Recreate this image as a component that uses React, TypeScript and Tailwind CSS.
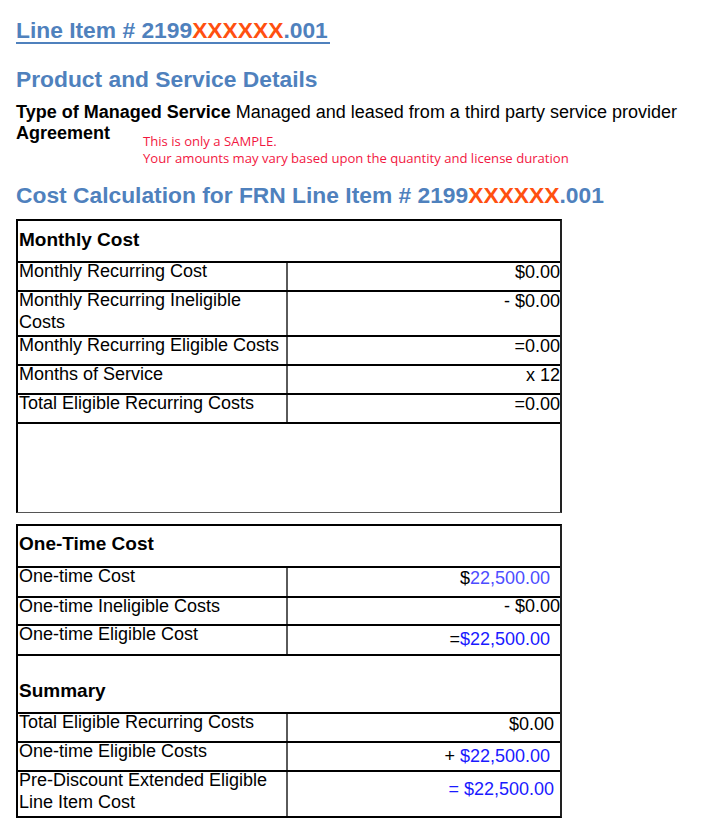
const BLUE_HEAD = "text-[#4f81bd]";

function Row({
  label,
  value,
  h = "h-[29px]",
  valueClass = "pt-[1px]",
  border = true,
}: {
  label: string[];
  value: React.ReactNode;
  h?: string;
  valueClass?: string;
  border?: boolean;
}) {
  return (
    <div className={`flex ${border ? "border-b-2 border-black" : ""} ${h}`}>
      <div className="w-[270px] shrink-0 border-r-2 border-[#5a5a5a] pl-[1px]">
        {label.map((line, i) => (
          <div key={i} className={`leading-[16px] ${i > 0 ? "mt-[6px]" : ""}`}>
            {line}
          </div>
        ))}
      </div>
      <div className="flex-1 text-right">
        <div className={`leading-[16px] ${valueClass}`}>{value}</div>
      </div>
    </div>
  );
}

function Xs() {
  return <span className="text-[#ff5010]">XXXXXX</span>;
}

export default function App() {
  return (
    <div
      className="min-h-[833px] bg-white pl-[16px] pt-[18px] text-black text-[18px]"
      style={{ fontFamily: '"Liberation Sans", Arial, sans-serif' }}
    >
      {/* Title */}
      <div className="inline-block border-b-2 border-[#4f81bd] pr-[2px]">
        <h1 className={`text-[22.8px] font-bold leading-[24px] ${BLUE_HEAD}`}>
          Line Item # 2199<Xs />.001
        </h1>
      </div>

      <h2 className={`mt-[21px] text-[22.8px] font-bold leading-[24px] ${BLUE_HEAD}`}>
        Product and Service Details
      </h2>

      <p className="mt-[11px] leading-[21px]">
        <span className="font-bold">Type of Managed Service</span> Managed and leased from a third party service provider
      </p>
      <div className="flex">
        <div className="w-[127px] shrink-0 font-bold leading-[21px]">Agreement</div>
        <div
          className="pt-[10px] text-[13.1px] leading-[17px] text-[#f2173f]"
          style={{ fontFamily: '"Open Sans", "Noto Sans", sans-serif' }}
        >
          <p>This is only a SAMPLE.</p>
          <p>Your amounts may vary based upon the quantity and license duration</p>
        </div>
      </div>

      <h2 className={`mt-[16px] text-[22.8px] font-bold leading-[24px] ${BLUE_HEAD}`}>
        Cost Calculation for FRN Line Item # 2199<Xs />.001
      </h2>

      {/* Monthly cost */}
      <div className="mt-[12px] w-[546px] border-t-2 border-l-2 border-r-2 border-b-[1.5px] border-t-black border-l-black border-r-[#222] border-b-[#555]">
        <div className="h-[42px] border-b-2 border-black pl-[1px] pt-[9px] text-[19px] font-bold leading-[20px]">
          Monthly Cost
        </div>
        <Row label={["Monthly Recurring Cost"]} value="$0.00" />
        <Row label={["Monthly Recurring Ineligible", "Costs"]} value="- $0.00" h="h-[45px]" />
        <Row label={["Monthly Recurring Eligible Costs"]} value="=0.00" />
        <Row label={["Months of Service"]} value="x 12" />
        <Row label={["Total Eligible Recurring Costs"]} value="=0.00" />
        <div className="h-[88px]" />
      </div>

      {/* One-time cost + summary */}
      <div className="mt-[11px] w-[546px] border-2 border-t-black border-l-black border-r-[#222] border-b-black">
        <div className="h-[42px] border-b-2 border-black pl-[1px] pt-[8px] text-[19px] font-bold leading-[20px]">
          One-Time Cost
        </div>
        <Row
          label={["One-time Cost"]}
          valueClass="pt-[2px] pr-[10px]"
          h="h-[30px]"
          value={
            <>
              $<span className="text-[#4d4dff]">22,500.00</span>
            </>
          }
        />
        <Row label={["One-time Ineligible Costs"]} value="- $0.00" valueClass="pt-0" h="h-[28px]" />
        <Row
          label={["One-time Eligible Cost"]}
          valueClass="pt-[5px] pr-[10px]"
          h="h-[30px]"
          value={
            <>
              =<span className="text-[#1a1aff]">$22,500.00</span>
            </>
          }
        />
        <div className="h-[58px] border-b-2 border-black pl-[1px] pt-[25px] text-[19px] font-bold leading-[20px]">
          Summary
        </div>
        <Row
          label={["Total Eligible Recurring Costs"]}
          valueClass="pt-[1.5px] pr-[6px]"
          value="$0.00"
        />
        <Row
          label={["One-time Eligible Costs"]}
          valueClass="pt-[4.5px] pr-[10px]"
          value={
            <>
              + <span className="text-[#1a1aff]">$22,500.00</span>
            </>
          }
        />
        <Row
          label={["Pre-Discount Extended Eligible", "Line Item Cost"]}
          valueClass="pt-[9px] pr-[6px] text-[#1a1aff]"
          h="h-[44px]"
          border={false}
          value="= $22,500.00"
        />
      </div>
    </div>
  );
}
